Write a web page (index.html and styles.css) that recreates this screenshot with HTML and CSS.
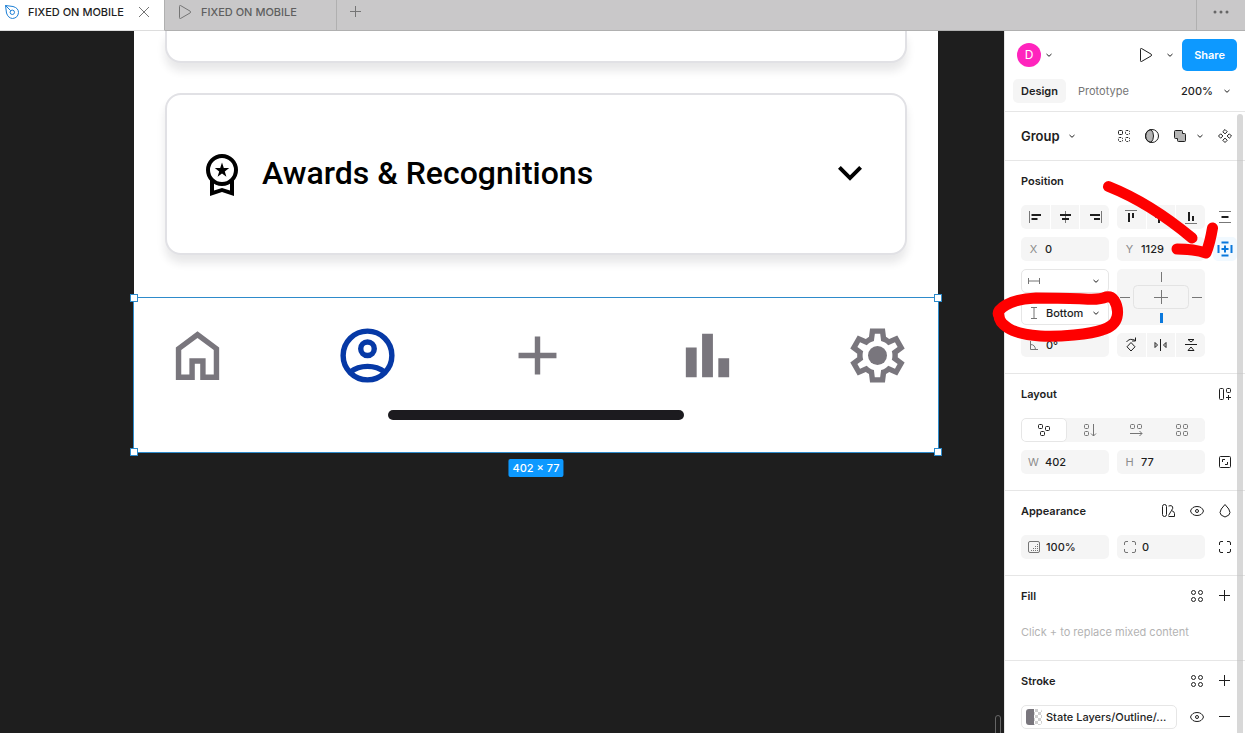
FILE: index.html
```html
<!DOCTYPE html>
<html lang="en">
<head>
    <meta charset="UTF-8">
    <meta name="viewport" content="width=device-width, initial-scale=1.0">
    <title>FIXED ON MOBILE</title>
    <link rel="stylesheet" href="styles.css">
</head>
<body>
    <!-- shared icons -->
    <svg class="sprite" aria-hidden="true">
        <symbol id="chevron" viewBox="0 0 8 8"><path d="M1.500 3 4 5.300 6.500 3"/></symbol>
        <symbol id="plus" viewBox="0 0 24 24"><path d="M11.500 6v11M6 11.500h11"/></symbol>
        <symbol id="play" viewBox="0 0 24 24"><path d="M6.500 6.300v11.400q0 1.300 1.200.7l9.500-5.500q1-.9 0-1.700L7.700 5.600q-1.200-.6-1.200.7z"/></symbol>
        <symbol id="eye" viewBox="0 0 24 24"><path d="M5.500 12q1.500-4.500 6.500-4.500t6.500 4.500q-1.500 4.500-6.500 4.500T5.500 12z"/><circle cx="12" cy="12" r="1.500"/></symbol>
        <symbol id="styles" viewBox="0 0 24 24"><circle cx="8.500" cy="8.500" r="2"/><circle cx="15.500" cy="8.500" r="2"/><circle cx="8.500" cy="15.500" r="2"/><circle cx="15.500" cy="15.500" r="2"/></symbol>
        <symbol id="corners" viewBox="0 0 24 24"><path d="M6.500 10V8q0-1.500 1.500-1.500h2M14 6.500h2q1.500 0 1.500 1.500v2M17.500 14v2q0 1.500-1.500 1.500h-2M10 17.500H8q-1.500 0-1.500-1.500v-2"/></symbol>
    </svg>

    <header class="tabs">
        <div class="tab active">
            <svg class="icon pen" viewBox="0 0 24 24"><path d="M5.500 5.500 13 6.500q5.500 1.500 5.500 6-.5 5.500-6 6-4.500-.5-6-5.500zM5.500 5.500l5.200 5.200"/><circle cx="12.300" cy="12.300" r="2.200"/></svg>
            <span>FIXED ON MOBILE</span>
            <button class="icon-btn" aria-label="Close tab"><svg class="icon gray" viewBox="0 0 24 24"><path d="m7 7 10 10M17 7 7 17"/></svg></button>
        </div>
        <div class="tab">
            <svg class="icon gray"><use href="#play"/></svg>
            <span>FIXED ON MOBILE</span>
        </div>
        <button class="icon-btn new-tab" aria-label="New tab"><svg class="icon gray"><use href="#plus"/></svg></button>
        <button class="icon-btn more" aria-label="More"><svg class="icon dots" viewBox="0 0 24 24"><circle cx="6" cy="12" r="1.500"/><circle cx="12" cy="12" r="1.500"/><circle cx="18" cy="12" r="1.500"/></svg></button>
    </header>

    <div class="workspace">
        <main class="canvas">
            <div class="artboard">
                <div class="card cut"></div>
                <div class="card">
                    <svg class="card-icon" viewBox="0 0 24 24"><path d="M6 15v8l6-2 6 2v-8h-2v5.200L12 19l-4 1.200V15z"/><circle cx="12" cy="10" r="7" fill="none" stroke="#000" stroke-width="2"/><path d="m12 6.300.9 2.700h2.700l-2.200 1.700.8 2.700-2.200-1.700-2.200 1.700.8-2.700L8.400 9h2.700z"/></svg>
                    <h2>Awards &amp; Recognitions</h2>
                    <svg class="card-icon" viewBox="0 0 24 24"><path d="m12 15.400-6-6L7.400 8l4.600 4.600L16.600 8 18 9.400z"/></svg>
                </div>

                <nav class="bottom-nav">
                    <div class="nav-items">
                        <svg viewBox="0 0 24 24"><path d="M6 19h3v-6h6v6h3v-9l-6-4.500L6 10zm-2 2V9l8-6 8 6v12h-7v-6h-2v6z"/></svg>
                        <svg class="selected" viewBox="0 0 24 24"><circle cx="12" cy="12" r="9"/><circle cx="12" cy="9.500" r="2.500"/><path d="M5.600 18.100Q8.300 16 12 16t6.400 2.100"/></svg>
                        <svg viewBox="0 0 24 24"><path d="M11 19v-6H5v-2h6V5h2v6h6v2h-6v6z"/></svg>
                        <svg viewBox="0 0 24 24"><path d="M4 20V9h4v11zm6 0V4h4v16zm6 0v-7h4v7z"/></svg>
                        <svg viewBox="0 0 24 24"><path d="m9.250 22-.4-3.200q-.325-.125-.612-.3t-.563-.375L4.700 19.375l-2.750-4.750 2.575-1.950Q4.500 12.500 4.500 12.337v-.675q0-.162.025-.337L1.950 9.375l2.750-4.750 2.975 1.250q.275-.2.575-.375t.6-.3l.4-3.200h5.500l.4 3.200q.325.125.613.3t.562.375l2.975-1.250 2.750 4.750-2.575 1.950q.025.175.025.338v.674q0 .163-.05.338l2.575 1.950-2.750 4.750-2.950-1.250q-.275.2-.575.375t-.6.3l-.4 3.200zM11 20h1.975l.35-2.650q.775-.2 1.438-.587t1.212-.938l2.475 1.025.975-1.700-2.150-1.625q.125-.35.175-.737T17.500 12t-.05-.787-.175-.738l2.150-1.625-.975-1.700-2.475 1.050q-.55-.575-1.212-.962t-1.438-.588L13 4h-1.975l-.35 2.650q-.775.2-1.437.588t-1.213.937L5.550 7.150l-.975 1.700 2.150 1.600q-.125.375-.175.75t-.05.8q0 .4.05.775t.175.75l-2.150 1.625.975 1.700 2.475-1.050q.55.575 1.213.963t1.437.587z"/><circle cx="12" cy="12" r="3.500"/></svg>
                    </div>
                    <div class="home-indicator"></div>
                    <i class="handle tl"></i><i class="handle tr"></i><i class="handle bl"></i><i class="handle br"></i>
                    <span class="size-label">402 × 77</span>
                </nav>
            </div>
            <div class="resize-grip"></div>
        </main>

        <aside class="panel">
            <div class="panel-head">
                <div class="head-row">
                    <span class="avatar">D</span>
                    <button class="icon-btn narrow" aria-label="Account"><svg class="chev"><use href="#chevron"/></svg></button>
                    <button class="icon-btn push" aria-label="Present"><svg class="icon"><use href="#play"/></svg></button>
                    <button class="icon-btn" aria-label="Present options"><svg class="chev"><use href="#chevron"/></svg></button>
                    <button class="share">Share</button>
                </div>
                <div class="head-row">
                    <button class="mode active">Design</button>
                    <button class="mode">Prototype</button>
                    <button class="zoom push">200% <svg class="chev"><use href="#chevron"/></svg></button>
                </div>
            </div>

            <div class="group-row">
                <button class="group-name">Group <svg class="chev"><use href="#chevron"/></svg></button>
                <button class="icon-btn push" aria-label="Select matching"><svg class="icon" viewBox="0 0 24 24"><rect x="6.500" y="6.500" width="4" height="4" rx="1"/><g stroke-dasharray="1.500 1"><rect x="13.500" y="6.500" width="4" height="4" rx="1"/><rect x="6.500" y="13.500" width="4" height="4" rx="1"/><rect x="13.500" y="13.500" width="4" height="4" rx="1"/></g></svg></button>
                <button class="icon-btn" aria-label="Use as mask"><svg class="icon" viewBox="0 0 24 24"><path d="M11 5.600a6.500 6.500 0 0 0 0 12.800q2.500-2.400 2.500-6.400T11 5.600z" fill="#b5b5b5"/><circle cx="12" cy="12" r="6.500"/></svg></button>
                <button class="icon-btn" aria-label="Boolean groups"><svg class="icon" viewBox="0 0 24 24"><path d="M7.500 6.500h6q1 0 1 1v2h2q1 0 1 1v6q0 1-1 1h-6q-1 0-1-1v-2h-2q-1 0-1-1v-6q0-1 1-1z" fill="#b5b5b5"/></svg></button>
                <button class="icon-btn narrow" aria-label="Boolean options"><svg class="chev"><use href="#chevron"/></svg></button>
                <button class="icon-btn component" aria-label="Create component"><svg class="icon" viewBox="0 0 24 24"><path d="m12 5.500 2.200 2.200L12 9.900 9.800 7.700zM16.300 9.800l2.200 2.200-2.200 2.200-2.200-2.200zM12 14.100l2.200 2.200-2.200 2.200-2.200-2.200zM7.700 9.800 9.900 12l-2.200 2.200L5.500 12z"/></svg></button>
            </div>

            <section class="section">
                <div class="title-row"><h3>Position</h3></div>
                <div class="fields">
                    <div class="segments">
                        <button aria-label="Align left"><svg class="icon" viewBox="0 0 24 24"><path class="thin" d="M6.500 6v12"/><path d="M8.500 10H18M8.500 14h6" stroke-width="2"/></svg></button>
                        <button aria-label="Align horizontal centers"><svg class="icon" viewBox="0 0 24 24"><path class="thin" d="M12.500 6v12"/><path d="M7 10h11M9 14h7" stroke-width="2"/></svg></button>
                        <button aria-label="Align right"><svg class="icon" viewBox="0 0 24 24"><path class="thin" d="M18.500 6v12"/><path d="M7 10h10M11 14h6" stroke-width="2"/></svg></button>
                    </div>
                    <div class="segments">
                        <button aria-label="Align top"><svg class="icon" viewBox="0 0 24 24"><path class="thin" d="M6 5.500h12"/><path d="M10 8v9M14 8v5" stroke-width="2"/></svg></button>
                        <button aria-label="Align vertical centers"><svg class="icon" viewBox="0 0 24 24"><path class="thin" d="M6 12.500h12"/><path d="M10 7v11M14 9v7" stroke-width="2"/></svg></button>
                        <button aria-label="Align bottom"><svg class="icon" viewBox="0 0 24 24"><path class="thin" d="M6 18.500h12"/><path d="M10 7v9M14 11v5" stroke-width="2"/></svg></button>
                    </div>
                    <button class="icon-btn" aria-label="Distribute"><svg class="icon" viewBox="0 0 24 24"><path class="thin" d="M6 6.500h12M6 17.500h12"/><path d="M8.500 12h7" stroke-width="2"/></svg></button>

                    <label class="field"><span>X</span><input value="0"></label>
                    <label class="field"><span>Y</span><input value="1129"></label>
                    <button class="icon-btn on" aria-label="Constraints"><svg class="icon" viewBox="0 0 24 24"><path d="M5.500 8v8M18.500 8v8M8.500 5.500h7M8.500 18.500h7M12 8.500v7M8.500 12h7"/></svg></button>

                    <div class="stack">
                        <label class="field outlined">
                            <svg class="icon small gray" viewBox="0 0 16 16"><path d="M2.500 5v6M13.500 5v6M2.500 8h11"/></svg>
                            <select aria-label="Horizontal constraint"><option></option><option>Left</option></select>
                            <svg class="chev"><use href="#chevron"/></svg>
                        </label>
                        <label class="field outlined">
                            <svg class="icon small gray" viewBox="0 0 16 16"><path d="M5 2.500h6M5 13.500h6M8 2.500v11"/></svg>
                            <select aria-label="Vertical constraint"><option>Bottom</option><option>Top</option></select>
                            <svg class="chev"><use href="#chevron"/></svg>
                        </label>
                    </div>
                    <svg class="constraints" viewBox="0 0 88 56"><rect x="16.500" y="16.500" width="55" height="23" rx="4" stroke="#e3e3e3"/><path d="M44.500 3v10M3 28.500h10M75 28.500h10M44.500 21v14M37 28.500h14" stroke="#777"/><path d="M44.500 44v10" stroke="#0a78dc" stroke-width="3"/></svg>
                    <span></span>

                    <label class="field"><svg class="icon small gray" viewBox="0 0 16 16"><path d="M4.500 4v8.500H12M4.500 7.500q4.500 0 5 5"/></svg><input value="0°" aria-label="Rotation"></label>
                    <div class="segments">
                        <button aria-label="Rotate 90"><svg class="icon" viewBox="0 0 24 24"><path d="m12 9.500 4 4.300-4 4.200-4-4.200zM7.500 9q3-4.500 9-1.500M16.500 4.500v3.500H13"/></svg></button>
                        <button aria-label="Flip horizontal"><svg class="icon" viewBox="0 0 24 24"><path d="M11.500 6v12M6 9.500v5l2.500-2.500zM17 9.500v5L14.500 12z"/></svg></button>
                        <button aria-label="Flip vertical"><svg class="icon" viewBox="0 0 24 24"><path d="M6 11.500h12M9 6.500h6l-3 2.500zM9 17.500h6L12 14z"/></svg></button>
                    </div>
                </div>
            </section>

            <section class="section">
                <div class="title-row"><h3>Layout</h3>
                    <button class="icon-btn" aria-label="Add auto layout"><svg class="icon" viewBox="0 0 24 24"><rect x="6.500" y="6.500" width="4" height="11" rx="1"/><rect x="13.500" y="6.500" width="4" height="4" rx="1"/><path d="M15.500 13v5M13 15.500h5"/></svg></button>
                </div>
                <div class="fields">
                    <div class="segments flow">
                        <button class="current" aria-label="Free form"><svg class="icon" viewBox="0 0 24 24"><rect x="6.500" y="6.500" width="4" height="4" rx="1"/><rect x="13.500" y="8.500" width="4" height="4" rx="1"/><rect x="8.500" y="13.500" width="4" height="4" rx="1"/></svg></button>
                        <button aria-label="Vertical"><svg class="icon gray" viewBox="0 0 24 24"><rect x="6.500" y="6.500" width="4" height="4" rx="1"/><rect x="6.500" y="13.500" width="4" height="4" rx="1"/><path d="M15.500 6v12M13 15.500l2.500 2.500 2.500-2.500"/></svg></button>
                        <button aria-label="Horizontal"><svg class="icon gray" viewBox="0 0 24 24"><rect x="6.500" y="6.500" width="4" height="4" rx="1"/><rect x="13.500" y="6.500" width="4" height="4" rx="1"/><path d="M6 15.500h12M15.500 13l2.500 2.500-2.500 2.500"/></svg></button>
                        <button aria-label="Grid"><svg class="icon gray" viewBox="0 0 24 24"><rect x="6.500" y="6.500" width="4" height="4" rx="1"/><rect x="13.500" y="6.500" width="4" height="4" rx="1"/><rect x="6.500" y="13.500" width="4" height="4" rx="1"/><rect x="13.500" y="13.500" width="4" height="4" rx="1"/></svg></button>
                    </div>
                    <span></span>
                    <label class="field"><span>W</span><input value="402"></label>
                    <label class="field"><span>H</span><input value="77"></label>
                    <button class="icon-btn" aria-label="Lock aspect ratio"><svg class="icon" viewBox="0 0 24 24"><rect x="6.500" y="6.500" width="11" height="11" rx="1"/><path d="M9.500 12V9.500H12M12 14.500h2.500V12"/></svg></button>
                </div>
            </section>

            <section class="section">
                <div class="title-row"><h3>Appearance</h3>
                    <button class="icon-btn" aria-label="Apply variable mode"><svg class="icon" viewBox="0 0 24 24"><rect x="5.500" y="5.500" width="4" height="12" rx="2"/><path d="M11.500 7q3-1 4 .5t-1 4l-3 5M14.500 11.500q3 1 3 3v3h-6"/></svg></button>
                    <button class="icon-btn" aria-label="Visibility"><svg class="icon"><use href="#eye"/></svg></button>
                    <button class="icon-btn" aria-label="Blend mode"><svg class="icon" viewBox="0 0 24 24"><path d="M12 5.500q5 5 5 8t-5 4.500q-5-1.500-5-4.500t5-8z"/></svg></button>
                </div>
                <div class="fields">
                    <label class="field"><svg class="icon small gray" viewBox="0 0 16 16"><rect x="2.500" y="2.500" width="11" height="11" rx="1.500"/><path d="M5 11.500h7M7 9.500h5M9 7.500h3M11 5.500h1" stroke-dasharray="1 1"/></svg><input value="100%" aria-label="Opacity"></label>
                    <label class="field"><svg class="icon small gray" viewBox="4 4 16 16"><use href="#corners" width="24" height="24"/></svg><input value="0" aria-label="Corner radius"></label>
                    <button class="icon-btn" aria-label="Individual corners"><svg class="icon"><use href="#corners"/></svg></button>
                </div>
            </section>

            <section class="section">
                <div class="title-row"><h3>Fill</h3>
                    <button class="icon-btn" aria-label="Fill styles"><svg class="icon"><use href="#styles"/></svg></button>
                    <button class="icon-btn" aria-label="Add fill"><svg class="icon"><use href="#plus"/></svg></button>
                </div>
                <p class="hint">Click + to replace mixed content</p>
            </section>

            <section class="section">
                <div class="title-row"><h3>Stroke</h3>
                    <button class="icon-btn" aria-label="Stroke styles"><svg class="icon"><use href="#styles"/></svg></button>
                    <button class="icon-btn" aria-label="Add stroke"><svg class="icon"><use href="#plus"/></svg></button>
                </div>
                <div class="stroke-row">
                    <button class="paint"><i class="swatch"></i>State Layers/Outline/...</button>
                    <button class="icon-btn" aria-label="Hide stroke"><svg class="icon"><use href="#eye"/></svg></button>
                    <button class="icon-btn" aria-label="Remove stroke"><svg class="icon" viewBox="0 0 24 24"><path d="M6 11.500h11"/></svg></button>
                </div>
            </section>
            <div class="scrollbar"></div>

            <!-- red marker drawn over the panel -->
            <svg class="marker" viewBox="0 0 255 200">
                <path d="M116 132Q110 135 94 134T46 133Q26 134 16 140T9 151q0 6 9 12t32 8q14 1 34-1t28-5q13-4 15-13t-3-17q-3-4-8-3"/>
                <path d="M118.500 21.500Q160 38 202 73"/>
                <path d="M187 84q17 0 29 4 4-10 6.500-25"/>
            </svg>
        </aside>
    </div>
</body>
</html>
```
FILE: styles.css
```css
* {
    box-sizing: border-box;
}

body {
    margin: 0;
    height: 100vh;
    display: flex;
    flex-direction: column;
    overflow: hidden;
    font-family: Inter, "Liberation Sans", sans-serif;
    font-size: 11px;
    line-height: 16px;
    color: #1e1e1e;
    background-color: #1e1e1e;
}

button, input, select {
    font: inherit;
    color: inherit;
    border: none;
    background: none;
    padding: 0;
    margin: 0;
}

h2, h3, p {
    margin: 0;
}

.sprite {
    position: absolute;
    width: 0;
    height: 0;
}

/* icons */
.icon {
    display: block;
    flex: none;
    width: 24px;
    height: 24px;
    fill: none;
    stroke: #1e1e1e;
}

.icon.small {
    width: 16px;
    height: 16px;
}

.icon.gray {
    stroke: #757575;
}

.icon .thin {
    stroke: #777;
}

.icon.pen {
    stroke: #1c7fd6;
}

.icon.dots {
    fill: #666;
    stroke: none;
}

.chev {
    width: 8px;
    height: 8px;
    flex: none;
    fill: none;
    stroke: #1e1e1e;
}

.icon-btn {
    display: flex;
    align-items: center;
    justify-content: center;
    width: 24px;
    height: 24px;
    flex: none;
}

.icon-btn.narrow {
    width: 16px;
}

.push {
    margin-left: auto;
}

/* tab bar */
.tabs {
    display: flex;
    flex: none;
    height: 31px;
    background-color: #c9c8c9;
    border-bottom: 1px solid #b0b0b0;
}

.tab {
    display: flex;
    gap: 4px;
    width: 172px;
    height: 30px;
    padding: 0 8px 6px;
    align-items: center;
    color: #5f5f5f;
    font-weight: 500;
    border-right: 1px solid #b0b0b0;
}

.tab.active {
    width: 165px;
    padding-left: 0;
    height: 31px;
    padding-bottom: 7px;
    background-color: #fff;
    color: #1e1e1e;
    border-bottom: 1px solid #ddd;
}

.tab.active .icon-btn {
    margin-left: 4px;
}

.new-tab {
    margin-left: 7px;
}

.more {
    margin-left: auto;
    width: 49px;
    height: 30px;
    padding-bottom: 6px;
    border-left: 1px solid #b0b0b0;
}

.workspace {
    display: flex;
    flex: 1;
    min-height: 0;
}

/* canvas */
.canvas {
    position: relative;
    flex: 1;
    padding: 0 66px 0 134px;
}

.artboard {
    background-color: #fff;
}

.card {
    display: flex;
    align-items: center;
    gap: 16px;
    height: 162px;
    margin: 0 31px 42px;
    padding: 0 31px;
    border: 2px solid #e1e1e5;
    border-radius: 16px;
    background-color: #fff;
    box-shadow: 0 8px 8px rgba(30, 28, 40, 0.1);
}

.card.cut {
    height: 32px;
    margin-bottom: 30px;
    border-top: none;
    border-radius: 0 0 16px 16px;
}

.card h2 {
    flex: 1;
    padding-bottom: 2px;
    font: 500 32px/48px Roboto, sans-serif;
    color: #000;
}

.card-icon {
    width: 48px;
    height: 48px;
}

/* the selection border sits just outside the artboard edges */
.bottom-nav {
    position: relative;
    margin: 0 -1px;
    padding: 25px 0 32px;
    border: 1px solid #2e8bcb;
}

.nav-items {
    display: flex;
    justify-content: space-between;
    padding: 0 28px 0 31px;
    fill: #79767d;
}

.nav-items svg {
    width: 65px;
    height: 65px;
}

.nav-items .selected {
    fill: none;
    stroke: #0639a6;
    stroke-width: 2;
}

.home-indicator {
    width: 296px;
    height: 10px;
    margin: 22px auto 0;
    border-radius: 5px;
    background-color: #1c1b1f;
}

.handle {
    position: absolute;
    width: 8px;
    height: 8px;
    background-color: #fff;
    border: 1px solid #2e8bcb;
}

.tl { left: -4px; top: -4px; }
.tr { right: -4px; top: -4px; }
.bl { left: -4px; bottom: -4px; }
.br { right: -4px; bottom: -4px; }

.size-label {
    position: absolute;
    top: 100%;
    left: 50%;
    transform: translateX(-50%);
    margin-top: 7px;
    padding: 1px 4px;
    border-radius: 2px;
    background-color: #0d99ff;
    color: #fff;
    font-weight: 500;
    white-space: nowrap;
}

.resize-grip {
    position: absolute;
    right: 3px;
    bottom: -4px;
    width: 6px;
    height: 22px;
    border: 1px solid #666;
    border-radius: 3px;
}

/* right panel */
.panel {
    position: relative;
    width: 241px;
    flex: none;
    background-color: #fff;
    border-left: 1px solid #e6e6e6;
}

.panel-head {
    display: flex;
    flex-direction: column;
    gap: 8px;
    padding: 8px;
    border-bottom: 1px solid #e6e6e6;
}

.head-row {
    display: flex;
    align-items: center;
}

.avatar {
    width: 24px;
    height: 24px;
    margin-left: 4px;
    border-radius: 50%;
    background-color: #ff24bd;
    color: #fff;
    font-size: 12px;
    line-height: 24px;
    text-align: center;
}

.share {
    height: 32px;
    padding: 0 12px;
    border-radius: 5px;
    background-color: #0d99ff;
    color: #fff;
    font-weight: 600;
}

.mode {
    height: 24px;
    padding: 0 8px;
    margin-right: 4px;
    border-radius: 5px;
    color: #757575;
}

.mode.active {
    background-color: #f5f5f5;
    color: #1e1e1e;
    font-weight: 600;
}

.zoom {
    display: flex;
    align-items: center;
    gap: 10px;
    padding-right: 6px;
    font-weight: 500;
}

.group-row {
    display: flex;
    align-items: center;
    gap: 4px;
    height: 49px;
    padding: 0 8px 0 16px;
    border-bottom: 1px solid #e6e6e6;
}

.group-row .narrow {
    margin: 0 -4px;
}

.group-row .component {
    margin-left: 5px;
}

.group-name {
    display: flex;
    align-items: center;
    gap: 8px;
    font-size: 13px;
    font-weight: 600;
}

.section {
    padding: 0 8px 16px 16px;
    border-bottom: 1px solid #e6e6e6;
}

.title-row {
    display: flex;
    align-items: center;
    gap: 4px;
    height: 40px;
    margin-bottom: 4px;
}

.title-row h3 {
    flex: 1;
    font-size: 11px;
    font-weight: 600;
}

.fields {
    display: grid;
    grid-template-columns: 1fr 1fr 24px;
    gap: 8px;
}

.field {
    display: flex;
    align-items: center;
    gap: 4px;
    min-width: 0;
    height: 24px;
    padding: 0 5px;
    border-radius: 5px;
    background-color: #f5f5f5;
}

.field > span {
    width: 15px;
    text-align: center;
    color: #8c8c8c;
}

.field input, .field select {
    flex: 1;
    min-width: 0;
    width: 0;
    font-weight: 500;
}

.field select {
    appearance: none;
}

.field.outlined {
    background-color: #fff;
    border: 1px solid #e6e6e6;
    padding: 0 8px 0 4px;
}

.stack {
    display: flex;
    flex-direction: column;
    gap: 8px;
}

.constraints {
    width: 100%;
    height: 56px;
    border-radius: 5px;
    background-color: #f5f5f5;
    fill: none;
}

.segments {
    display: flex;
    gap: 1px;
    height: 24px;
    border-radius: 5px;
    overflow: hidden;
}

.segments button {
    display: flex;
    flex: 1;
    align-items: center;
    justify-content: center;
    background-color: #f5f5f5;
}

.segments.flow {
    grid-column: span 2;
    gap: 0;
    background-color: #f5f5f5;
}

.segments.flow button {
    flex: 1 1 25%;
}

.segments .current {
    border: 1px solid #e6e6e6;
    border-radius: 5px;
    background-color: #fff;
}

.icon-btn.on {
    border-radius: 5px;
    background-color: #f1f9ff;
}

.on .icon {
    stroke: #0a78dc;
    stroke-width: 2;
}

.hint {
    line-height: 24px;
    color: #b3b3b3;
}

.stroke-row {
    display: flex;
    gap: 4px;
}

.paint {
    display: flex;
    flex: 1;
    align-items: center;
    gap: 4px;
    height: 24px;
    margin-right: 4px;
    padding: 0 4px;
    border: 1px solid #e6e6e6;
    border-radius: 5px;
    font-weight: 500;
    white-space: nowrap;
}

.swatch {
    width: 16px;
    height: 16px;
    border-radius: 3px;
    background: linear-gradient(90deg, #79767d 50%, transparent 50%), repeating-conic-gradient(#d0d0d0 0 25%, #fff 0 50%) 0 0 / 6px 6px;
}

.scrollbar {
    position: absolute;
    top: 83px;
    right: 2px;
    bottom: 0;
    width: 6px;
    border-radius: 3px 3px 0 0;
    background-color: rgba(190, 190, 190, 0.6);
}

.marker {
    position: absolute;
    top: 134px;
    right: 0;
    width: 255px;
    height: 200px;
    pointer-events: none;
    fill: none;
    stroke: #fe0000;
    stroke-width: 11;
    stroke-linecap: round;
    stroke-linejoin: round;
}
```
